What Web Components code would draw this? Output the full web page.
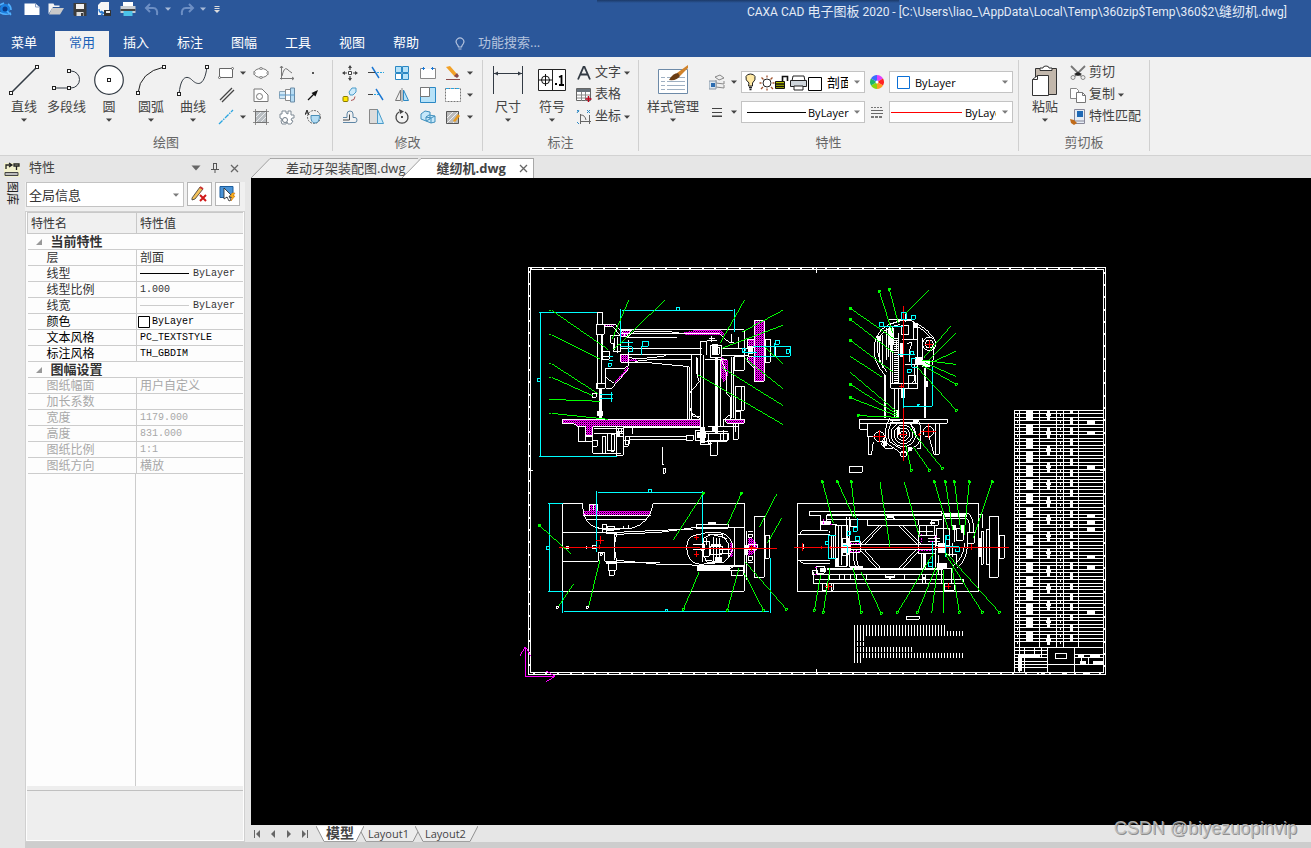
<!DOCTYPE html>
<html lang="zh-CN">
<head>
<meta charset="utf-8">
<title>CAXA CAD 电子图板 2020</title>
<style>
html, body { height: 100%; margin: 0; }
body { overflow: hidden; font-family: "Open Sans", "Noto Sans CJK SC", sans-serif; font-size: 13px; color: #444; }
</style>
</head>
<body>
<cad-app></cad-app>
<script>
/* Base class: every widget states its own styles and markup. */
class Widget extends HTMLElement {
  connectedCallback() {
    if (this.shadowRoot) return;
    const root = this.attachShadow({ mode: 'open' });
    root.innerHTML = '<style>*{box-sizing:border-box}button,select,input{font:inherit;color:inherit;margin:0}button{background:none;border:0;padding:0}' + this.css() + '</style>' + this.html();
  }
  css() { return ''; }
  html() { return '<slot></slot>'; }
}

/* Icon set: [width, height, markup] */
const sq = (x, y) => `<rect x="${x - 1.5}" y="${y - 1.5}" width="3" height="3" fill="#fff" stroke="#222"/>`;
const ICONS = {
  down: [6, 4, '<path d="M0 .5h6L3 3.8z" fill="#444"/>'],
  downlight: [6, 4, '<path d="M0 .5h6L3 3.8z" fill="#a9bbd8"/>'],
  app: [12, 16, '<circle cx="5" cy="8" r="5" fill="#1b7fe0"/><circle cx="5" cy="8" r="2.5" fill="#0b3c8c"/><path d="M-1 11Q5 15 11 12M0 4L4 2M7 10l4 4M8 3q3 2 3 6" stroke="#4fb0ff" stroke-width="1.6" fill="none"/>'],
  new: [16, 16, '<path d="M.5 2.500h11l4 3.500v8h-15z" fill="#fff"/><path d="M11.500 2.500V6h4" fill="none" stroke="#8ba0c4"/>'],
  open: [16, 16, '<path d="M.5 13V2.500h5l1 2h5V6H5z" fill="#f4f4f4"/><path d="M1 13.500L4 7h12l-4 6.500z" fill="#c9c9c9"/>'],
  save: [16, 16, '<path d="M1.500 2h13v13h-12l-1-1z" fill="#3d3d3d"/><path d="M4 3h8v5H4z" fill="#f1f1f1"/><path d="M4.500 11h7v4h-7z" fill="#ddd"/><path d="M9 12h2v3H9z" fill="#3d3d3d"/>'],
  saveas: [16, 16, '<path d="M2 9V4l3-3h8v8" fill="#f6f6f6"/><path d="M2 9v5h7v-5z" fill="#f6f6f6"/><path d="M3 8q0 4 4 4M5 10l3 2-3 2" fill="none" stroke="#2b7ad0" stroke-width="1.400"/><path d="M8 9h7v6H8z" fill="#333"/><path d="M10 10h4v2h-4z" fill="#eee"/>'],
  print: [16, 16, '<path d="M3 1h10v5H3z" fill="#fff"/><path d="M.5 5h15v7H.5z" fill="#c9cdd2"/><path d="M.5 8h15v2H.5z" fill="#444"/><path d="M3.500 10h9v5h-9z" fill="#4cc3e8"/>'],
  undo: [16, 16, '<path d="M6 3L2 7l4 4M2 7h7q5 0 4 7" fill="none" stroke="#6d8fc4" stroke-width="2"/>'],
  redo: [16, 16, '<path d="M10 3l4 4-4 4M14 7H7Q2 7 3 14" fill="none" stroke="#6d8fc4" stroke-width="2"/>'],
  more: [8, 8, '<path d="M1.500 1.500h5M1.500 3.500h5" stroke="#ddd"/><path d="M1 5h6L4 8z" fill="#ddd"/>'],
  bulb: [12, 14, '<path d="M4.500 10Q4 8 2.800 6.800A3.800 3.800 0 1 1 9.200 6.800Q8 8 7.500 10zM4.500 12h3" fill="none" stroke="#b4c3de" stroke-width="1.200"/>'],
  line: [30, 32, '<path d="M2 28L28 2" stroke="#333b44" stroke-width="1.600"/>' + sq(2, 28) + sq(28, 2)],
  pline: [30, 32, '<path d="M1 23h18a8.500 8.500 0 0 0 0-17h-2" fill="none" stroke="#333b44"/>' + sq(2, 23) + sq(17, 23) + sq(17, 6)],
  circle: [30, 32, '<circle cx="15" cy="15" r="14.300" fill="#fff" stroke="#333b44" stroke-width="1.200"/>' + sq(15, 15)],
  arc: [30, 32, '<path d="M2 28Q4 7 28 2" fill="none" stroke="#222"/>' + sq(2, 28) + sq(28, 2)],
  curve: [32, 32, '<path d="M2 29C4 9 11 11 15 15S27 24 30 2" fill="none" stroke="#333b44"/>' + sq(2, 29) + sq(30, 2)],
  rect: [16, 16, '<path d="M1.500 3.500h13v9h-13z" fill="#fff" stroke="#666"/><circle cx="14.500" cy="3.500" r="1" fill="#fff" stroke="#666"/><circle cx="1.500" cy="12.500" r="1" fill="#fff" stroke="#666"/>'],
  ellipse: [16, 16, '<ellipse cx="8" cy="8" rx="7" ry="4.500" fill="#fff" stroke="#777"/><path d="M7 2.500h2v2H7zM7 11.500h2v2H7zM0 7h2v2H0zM14 7h2v2h-2z" fill="#fff" stroke="#777" stroke-width=".7"/>'],
  graph: [16, 16, '<path d="M2.500 1v13.500M1 13.500h14M3 11Q5 2 8 4Q10 6 13 8" fill="none" stroke="#777"/><path d="M1 3l1.500-2L4 3M13 12l2 1.500-2 1.500" fill="none" stroke="#777"/>'],
  point: [16, 16, '<path d="M7 7h2v2H7z" fill="#555"/>'],
  parallel: [16, 16, '<path d="M1 13L13 1M3 15L15 3" stroke="#444" stroke-width="1.300"/>'],
  contour: [16, 16, '<path d="M1 14.500V2h8l6 6v6.500z" fill="#fff" stroke="#777"/><circle cx="6.500" cy="9.500" r="3" fill="none" stroke="#777"/>'],
  shaft: [16, 16, '<path d="M.5 4.500h6v7h-6z" fill="#cfe8f8" stroke="#8aa5b8"/><path d="M6.500 2.500h5v11h-5z" fill="#fff" stroke="#888"/><path d="M11.500 1h4v14h-4z" fill="#b6dcf4" stroke="#6b8ba5"/><path d="M0 8h16" stroke="#5b9ac9"/>'],
  arrow: [16, 16, '<path d="M3 13l6-6" stroke="#111" stroke-width="1.300"/><path d="M13 3l-2.500 6.500L6.500 6z" fill="#111"/>'],
  center: [16, 16, '<path d="M1 15L15 1" stroke="#2aa5e0" stroke-width="1.300" stroke-dasharray="5 1 1.500 1"/>'],
  hatch: [16, 16, '<path d="M2.500 2.500h11v11h-11z" fill="#b9bec2" stroke="#666"/><path d="M3 8l5-5M3 13L13 3M8 13l5-5" stroke="#fff" stroke-width=".7"/><path d="M2.500 0v16M13.500 0v16M0 2.500h16M0 13.500h16" stroke="#777" stroke-width=".8"/>'],
  gear: [16, 16, '<path d="M3 5V2h4v2l2 1V2h3v4h3v3h-2l-1 2 2 1-2 3h-3l-1-2-1 2H3l-1-3 1-2-2-1V5z" fill="#fff" stroke="#7f8a95"/><circle cx="6" cy="11" r="2.500" fill="#fff" stroke="#6f7a85"/>'],
  detail: [16, 16, '<circle cx="9" cy="8" r="6.500" fill="none" stroke="#666" stroke-dasharray="2 1"/><path d="M6 6.500h8.500q0 7.500-4.500 7.500T6 6.500z" fill="#b3dcf3" stroke="#4a8fb8"/><path d="M0 6l2-5 2 5M1 4h2" fill="none" stroke="#222"/>'],
  move: [16, 16, '<path d="M6.500 6.500h3v3h-3z" fill="#fff" stroke="#444"/><path d="M8 1v4M8 11v4M1 8h4M11 8h4" stroke="#444" stroke-width="1.200"/><path d="M8 0l2 3H6zM8 16l2-3H6zM0 8l3-2v4zM16 8l-3-2v4z" fill="#444"/>'],
  trim: [16, 16, '<path d="M4 2l7 11" stroke="#1976d2" stroke-width="1.400"/><path d="M0 7.500h7" stroke="#444"/><path d="M9 7.500h7" stroke="#2aa5e0" stroke-dasharray="2 1"/>'],
  array: [16, 16, '<path d="M1.500 1.500h6v6h-6zM8.500 1.500h6v6h-6zM8.500 8.500h6v6h-6z" fill="#b7e2f8" stroke="#2b88c4"/><path d="M1.500 8.500h6v6h-6z" fill="#fff" stroke="#2b88c4"/>'],
  stretch: [16, 16, '<path d="M.5 3.500h15v10H.5z" fill="#fff" stroke="#888"/><path d="M5 3.500h6" stroke="#f1f1f1"/><path d="M2 3.500h3M11 3.500h3M3.500 2v3M12.500 2v3" stroke="#1976d2"/>'],
  erase: [16, 16, '<path d="M1 2l4-1 7 8-2 3z" fill="#f2a127"/><path d="M9 11l3-3 2 3-2 2z" fill="#8a4b4b"/><path d="M1 14.500h14" stroke="#8a4b4b"/>'],
  copyobj: [16, 16, '<rect x="1" y="9.500" width="5" height="5" rx="1" fill="#ffe600" stroke="#8a7a00"/><path d="M7 5l3-4h4v4l-3 3H8z" fill="#cdeafa" stroke="#4a9bc9"/><path d="M9 13.500q4 0 4-4" fill="none" stroke="#a55"/>'],
  extend: [16, 16, '<path d="M8 2l7 11" stroke="#1976d2" stroke-width="1.400"/><path d="M0 7.500h5" stroke="#444"/><path d="M6 7.500h5" stroke="#2aa5e0" stroke-dasharray="2 1"/>'],
  mirror: [16, 16, '<path d="M6.500 3v10.500h-5z" fill="#eee" stroke="#777"/><path d="M9.500 3v10.500h5z" fill="#b7e2f8" stroke="#2b88c4"/><path d="M8 1v14" stroke="#888"/>'],
  scale: [16, 16, '<path d="M.5.5h15v15H.5z" fill="#b7e2f8" stroke="#2b88c4"/><path d="M.5.5h9v9h-9z" fill="#fff" stroke="#777"/>'],
  box: [16, 16, '<path d="M.5 1.500h15v13H.5z" fill="#fff" stroke="#777" stroke-dasharray="2 1"/><path d="M1 1.500h14" stroke="#2aa5e0" stroke-dasharray="3 2"/>'],
  offset: [16, 16, '<path d="M1 8.500h4V5q0-3 3-3t3 3v3.500h2q2 0 2 2.500t-2 2.500H1" fill="none" stroke="#5f86a5"/><path d="M1 11h6.500V5.500" fill="none" stroke="#444"/>'],
  taper: [16, 16, '<path d="M1.500.5h8v14h-8z" fill="#dcdcdc" stroke="#888"/><path d="M9.500.5l6 14h-6z" fill="#c6e8fa" stroke="#4a9bc9"/>'],
  rotate: [16, 16, '<path d="M5 3A6 6 0 1 0 11 3" fill="none" stroke="#444" stroke-width="1.300"/><path d="M5 0l5 2.500L6 5zM7 7h2v2H7z" fill="#444"/>'],
  cube: [16, 16, '<path d="M1 5l4-3 5 1v7l-4 2-5-2zM6 8l3-2 6 1v6l-4 1-5-2z" fill="#c6e8fa" stroke="#3f8fbd"/><path d="M6 8l5 1v5M11 9l4-2" fill="none" stroke="#3f8fbd"/>'],
  edithatch: [16, 16, '<path d="M1.500 2.500h12v12h-12z" fill="#bbb" stroke="#555"/><path d="M2 9l6-6M2 14L13 3M8 14l5-5" stroke="#eee"/><path d="M8 12l5-7 2 2-5 6z" fill="#e69a1f"/>'],
  dim: [32, 30, '<path d="M1.500 1v28M30.500 1v28M2 8.500h28" stroke="#333b44"/><path d="M2 8.500l4-2v4zM30 8.500l-4-2v4z" fill="#333b44"/>'],
  symbol: [30, 30, '<path d="M1.500 4.500h27v21h-27zM15.500 4.500v21" fill="#fff" stroke="#222"/><circle cx="8.500" cy="15" r="4" fill="none" stroke="#111"/><path d="M8.500 9v12M2 15h13" stroke="#111"/><path d="M18 18h2v2h-2z" fill="#000"/><path d="M24.500 10v9.500M22 20h5M22 12l3-1" stroke="#000" stroke-width="1.800" fill="none"/>'],
  text: [16, 16, '<path d="M2 14.500L7.500 2h1L14 14.500M4.500 9.500h7" fill="none" stroke="#333b44" stroke-width="1.800"/>'],
  table: [16, 16, '<path d="M.5 1.500h14v12H.5z" fill="#fff" stroke="#666"/><path d="M1 2h13v3H1z" fill="#6a737c"/><path d="M1 8h13M1 11h13M5.500 5v9M9.500 5v9" stroke="#888"/><path d="M12.500 9v6M9.500 12h6" stroke="#c0021b" stroke-width="1.500"/>'],
  coord: [16, 16, '<path d="M4.500 5v10M4 12.500h11M5 6q4 0 5 5M13.500 6v9" fill="none" stroke="#666"/><path d="M1 1l2 2M3 1L1 4M11 1l3 3M14 1l-3 3M1 13l2 2" stroke="#2b88c4"/>'],
  style: [32, 30, '<path d="M1.500 4.500h29v24h-29z" fill="#fff" stroke="#6d8aa8"/><path d="M4 12.500h4M4 16.500h4M4 20.500h4M4 24.500h4M10 12.500h18M10 16.500h18M10 20.500h18M10 24.500h18" stroke="#9fb0c2"/><path d="M31 0L20 8l3 3 8-8z" fill="#d0822a"/><path d="M21 8q-5 0-9 7 8 1 11-4z" fill="#6b3d14"/>'],
  layers: [16, 16, '<path d="M6 3l5-2 4 3-5 2zM7 6v3l8 1V7M7 10v3l8 1v-3" fill="#eee" stroke="#888"/><path d="M0 7h7v8H0z" fill="#dbe6f0" stroke="#8a97a5"/><path d="M2 9h4v4H2z" fill="#2b6cb0"/>'],
  lines: [16, 16, '<path d="M3 4.500h10M3 8.500h10M3 12.500h10" stroke="#444"/><path d="M3 11.500h10" stroke="#999"/>'],
  wheel: [14, 14, '<path d="M7 7V0A7 7 0 0 1 13 3.500z" fill="#e040fb"/><path d="M7 7l6-3.500a7 7 0 0 1 0 7z" fill="#f22"/><path d="M7 7l6 3.500A7 7 0 0 1 7 14z" fill="#ff9a1f"/><path d="M7 7v7a7 7 0 0 1-6-3.500z" fill="#8bd60b"/><path d="M7 7l-6 3.500a7 7 0 0 1 0-7z" fill="#1fb56a"/><path d="M7 7L1 3.500A7 7 0 0 1 7 0z" fill="#3a6cff"/><circle cx="7" cy="7" r="1.500" fill="#fff"/>'],
  widths: [14, 14, '<path d="M1 2.500h12" stroke="#777" stroke-dasharray="2 1"/><path d="M1 5.500h12M1 8.500h12" stroke="#666"/><path d="M1 12h12" stroke="#777" stroke-width="2" stroke-dasharray="3 1"/>'],
  paste: [28, 32, '<path d="M4.500 3.500h21v26h-21z" fill="#c2b7ab" stroke="#333"/><path d="M9 5.500h12V3h-3Q18 1 15 1t-3 2H9z" fill="#fff" stroke="#333"/><path d="M1.500 30.500v-16l5-4h11v20z" fill="#fff" stroke="#333"/><path d="M1.500 14.500h5v-4" fill="none" stroke="#333"/>'],
  cut: [16, 16, '<path d="M1 1l10 10M15 1L5 11" stroke="#777" stroke-width="1.800"/><path d="M4 9l4-2 4 2-4 2z" fill="#222"/><circle cx="3" cy="12.500" r="2" fill="#eee" stroke="#888"/><circle cx="13" cy="12.500" r="2" fill="#eee" stroke="#888"/>'],
  copy: [16, 16, '<path d="M.5 1.500h6l2 2v8h-8z" fill="#fff" stroke="#888"/><path d="M6.500 5.500h6l3 3v7h-9z" fill="#fff" stroke="#777"/><path d="M12.500 5.500v3h3" fill="none" stroke="#777"/>'],
  match: [16, 16, '<path d="M4.500.5h10v14h-10z" fill="#e6edf5" stroke="#889"/><path d="M7 2h6v6H7z" fill="#1f69b5"/><path d="M5 12h9" stroke="#889"/><path d="M0 10l4 1 3 3-3 2-3-2z" fill="#c06b1a"/>'],
  layerstate: [82, 20, '<path d="M6 11Q2 8 3 4.500 4 2 7.500 2T12 4.500Q13 8 9.500 11v3h-4z" fill="#ffe9a3" stroke="#222"/><path d="M6 15.500h3M6.500 17.500h2" stroke="#222" stroke-width="1.500"/><circle cx="24" cy="11" r="4" fill="#fff" stroke="#222"/><path d="M24 3.500v2M24 16.500v2M16.500 11h2M29.500 11h2M18.500 5.500l2 2M28 15l2 2M29.500 5.500l-2 2M20 15l-2 2" stroke="#a0522d" stroke-width="1.300"/><path d="M32.500 9.500h9v7h-9z" fill="#b5c000" stroke="#111"/><path d="M33 12h8M33 14.500h8M39.500 9V4.500h5V9" fill="none" stroke="#111" stroke-width="1.600"/><path d="M50 4h11l1 5H49z" fill="#fff" stroke="#222"/><path d="M47.500 8.500h16v6h-16z" fill="#cfd6dc" stroke="#222"/><path d="M51 14h9v4h-9z" fill="#fff" stroke="#222"/><path d="M65.500 5.500h13v13h-13z" fill="#fff" stroke="#000"/>'],
  solid: [60, 3, '<path d="M1 1.500h59" stroke="#000"/>'],
  redline: [71, 3, '<path d="M0 1.500h71" stroke="#f00"/>'],
  swatch: [13, 13, '<path d="M.5.5h12v12H.5z" fill="#fff" stroke="#0a6fd6"/>'],
  longline: [49, 3, '<path d="M0 1.500h49" stroke="#000"/>'],
  thinline: [49, 3, '<path d="M0 1.500h49" stroke="#ccc"/>'],
  blacksq: [12, 12, '<path d="M.5.5h11v11H.5z" fill="#fff" stroke="#000"/>'],
  paneldown: [10, 6, '<path d="M.5 .5h9L5 5.500z" fill="#666"/>'],
  pin: [10, 10, '<path d="M3 .5h4M3.500 0v6M6.500 0v6M1 6.500h8M5 6v4" fill="none" stroke="#555"/>'],
  close: [9, 9, '<path d="M1 1l7 7M8 1L1 8" stroke="#666" stroke-width="1.300"/>'],
  pencilx: [18, 16, '<path d="M1 12L9 1l3 2-8 10-3 1z" fill="#f3c15b" stroke="#333" stroke-width=".8"/><path d="M9 1l3 2" stroke="#c33" stroke-width="2"/><path d="M9 9l6 6M15 9l-6 6" stroke="#d01818" stroke-width="2"/>'],
  pick: [18, 18, '<path d="M1 1.500h13v11H1z" fill="#4a93d6" stroke="#1c5d9c"/><path d="M5 3v11l3-2 2 4 2-1-2-4h3z" fill="#fff" stroke="#222" stroke-width=".8"/><path d="M13 8l-2 4h2l-1 4 4-5h-2l2-3z" fill="#ffb31a" stroke="#c76a00" stroke-width=".5"/>'],
  library: [16, 16, '<path d="M0 2h16v14H0z" fill="#f1f0cc"/><path d="M2 8V4h5M5 2l3 2-3 2M10 3h5v2h-5zM12.500 5v4" stroke="#222" fill="none" stroke-width="1.300"/><path d="M1 11.500h13v3H1z" fill="#bbb" stroke="#444"/>'],
  expand: [6, 6, '<path d="M6 0v6H0z" fill="#999"/>'],
  first: [8, 8, '<path d="M1.500 0v8" stroke="#666"/><path d="M7 0v8L3 4z" fill="#666"/>'],
  prev: [8, 8, '<path d="M6 0v8L2 4z" fill="#666"/>'],
  next: [8, 8, '<path d="M2 0v8l4-4z" fill="#666"/>'],
  last: [8, 8, '<path d="M6.500 0v8" stroke="#666"/><path d="M1 0v8l4-4z" fill="#666"/>']
};

class CadIcon extends Widget {
  css() { return ':host{display:inline-flex;flex:none}svg{display:block}'; }
  html() {
    const [w, h, body] = ICONS[this.getAttribute('name')];
    return `<svg width="${w}" height="${h}" viewBox="0 0 ${w} ${h}" aria-hidden="true">${body}</svg>`;
  }
}

const icon = n => `<cad-icon name="${n}"></cad-icon>`;

class TitleBar extends Widget {
  css() { return `
    :host{display:flex;position:relative;height:31px;color:#e4ebf6;align-items:flex-start;justify-content:space-between}
    .quick{display:flex;align-items:center;height:18px}
    button{display:flex;align-items:center;justify-content:center;width:16px;height:16px}
    .quick .file{margin-right:8px}
    .app{width:12px;margin-right:12px}
    .redo{margin-left:3px}
    .more{width:12px}
    h1{margin:0 24px 0 0;font:400 12px/24px Roboto,"Noto Sans CJK SC",sans-serif;white-space:nowrap}
    h1 span{font-size:13px}
    .shade{position:absolute;left:597px;width:23%;top:0;height:3px;background:linear-gradient(#1c3a68,#2b579a)}`; }
  html() {
    const files = [['new', '新建'], ['open', '打开'], ['save', '保存'], ['saveas', '另存为'], ['print', '打印']];
    return `<div class="quick"><button class="app" aria-label="CAXA">${icon('app')}</button>` +
      files.map(([n, t]) => `<button class="file" aria-label="${t}">${icon(n)}</button>`).join('') +
      `<button aria-label="撤销">${icon('undo')}</button><button aria-label="撤销列表">${icon('downlight')}</button>
       <button class="redo" aria-label="恢复">${icon('redo')}</button><button aria-label="恢复列表">${icon('downlight')}</button>
       <button class="more" aria-label="自定义">${icon('more')}</button></div>
       <div class="shade"></div>
       <h1>CAXA CAD <span>电子图板</span> 2020 - [C:\\Users\\liao_\\AppData\\Local\\Temp\\360zip$Temp\\360$2\\<span>缝纫机</span>.dwg]</h1>`;
  }
}

class RibbonTabs extends Widget {
  css() { return `
    :host{display:flex;height:26px;color:#fff;align-items:stretch}
    button{width:54px;line-height:20px;padding-bottom:4px;text-align:center}
    .menu{width:48px;margin-right:7px}
    .on{background:#f1f1f1;color:#1a62b8}
    label{display:flex;align-items:center;margin-left:21px;gap:12px;color:#b4c3de}
    input{width:120px;border:0;background:none;padding:0 0 4px;outline:0}
    input::placeholder{color:#b4c3de;opacity:1}`; }
  html() {
    return '<button class="menu">菜单</button>' +
      ['常用', '插入', '标注', '图幅', '工具', '视图', '帮助'].map((t, i) => `<button${i ? '' : ' class="on"'}>${t}</button>`).join('') +
      `<label>${icon('bulb')}<input placeholder="功能搜索..." aria-label="功能搜索"></label>`;
  }
}

class BigButton extends Widget {
  css() { return `
    :host{display:block;width:var(--w,42px);flex:none}
    button{display:flex;flex-direction:column;align-items:center;width:100%;height:66px;white-space:nowrap}
    .pic{height:32px;display:flex;align-items:flex-start}
    .t{line-height:18px}
    .d{height:10px;display:flex;align-items:center}`; }
  html() {
    return `<button><span class="pic">${icon(this.getAttribute('icon'))}</span><span class="t"><slot></slot></span>${this.hasAttribute('flat') ? '' : `<span class="d">${icon('down')}</span>`}</button>`;
  }
}

class SmallButton extends Widget {
  css() { return `
    :host{display:flex;height:22px;align-items:center}
    button{display:flex;align-items:center;height:22px;white-space:nowrap}
    .p{width:26px;justify-content:center}
    :host([drop]) .p{width:24px}
    :host .text .p{width:auto;gap:3px}
    .text{display:flex}
    .t{line-height:18px;padding-bottom:4px}
    .d{width:10px;justify-content:center}
    .text .d{width:12px}
    .bare{display:flex}`; }
  html() {
    const t = this.getAttribute('text') || '';
    return `<span class="${t ? 'text' : 'bare'}"><button class="p" ${t ? '' : `aria-label="${this.getAttribute('icon')}"`}>${icon(this.getAttribute('icon'))}${t && `<span class="t">${t}</span>`}</button>${this.hasAttribute('drop') ? `<button class="d" aria-label="更多">${icon('down')}</button>` : ''}</span>`;
  }
}

class RibbonGroup extends Widget {
  css() { return `
    :host{display:flex;flex-direction:column;height:91px;border-right:1px solid #d0d0d0;flex:none}
    .body{display:flex;height:72px;padding:5px var(--pr,5px) 0 var(--pl,3px)}
    .name{text-align:center;line-height:18px;margin-top:1px;color:#666}`; }
  html() { return `<div class="body"><slot></slot></div><div class="name">${this.getAttribute('label')}</div>`; }
}

class CadCombo extends Widget {
  css() { return `
    :host{display:inline-grid;width:124px;height:22px;align-items:center;background:#fff;border:1px solid #c3c3c3;color:#000}
    select,.art,.arrow{grid-area:1/1}
    select{appearance:none;border:0;background:none;width:100%;height:100%;padding:0 var(--r,12px) 0 var(--l,4px);font-size:var(--fs,11px);border-radius:0;overflow:hidden}
    .art,.arrow{pointer-events:none;display:flex}
    .art{margin-left:var(--a,4px)}
    .arrow{justify-self:end;margin-right:4px;opacity:.7}`; }
  html() {
    const a = this.getAttribute('art');
    return `<select aria-label="${this.getAttribute('label')}"><option>${this.getAttribute('value')}</option></select>${a ? `<span class="art">${icon(a)}</span>` : ''}<span class="arrow">${icon('down')}</span>`;
  }
}

class RibbonBar extends Widget {
  css() { return `
    :host{display:flex;height:99px;padding-top:3px;background:#f1f1f1;border-bottom:1px solid #d2d2d2}
    .g{display:grid;grid-auto-flow:column;grid-template-rows:repeat(3,22px);align-content:start;margin-top:-3px}
    .list{display:grid;grid-template-rows:repeat(3,22px);margin-top:-3px;padding-left:2px}
    .pairs{display:grid;grid-template-rows:repeat(2,30px);grid-template-columns:38px 124px 24px 124px;align-items:center;padding-top:2px}
    .pairs cad-icon,.pairs small-button{justify-self:center}
    .layer{--l:85px;--a:1px;--fs:13px;--r:16px}
    .color{--l:25px;--a:7px}
    .ltype{--l:66px}
    .lwidth{--l:75px;--a:1px;--r:16px}`; }
  html() {
    const s = (n, d) => `<small-button icon="${n}"${d ? ' drop' : ''}></small-button>`;
    return `
    <ribbon-group label="绘图" style="--pr:6px">
      <big-button icon="line">直线</big-button><big-button icon="pline" flat style="--w:43px">多段线</big-button>
      <big-button icon="circle">圆</big-button><big-button icon="arc">圆弧</big-button><big-button icon="curve">曲线</big-button>
      <div class="g">${s('rect', 1)}${s('parallel')}${s('center', 1)}${['ellipse', 'contour', 'hatch', 'graph', 'shaft', 'gear', 'point', 'arrow', 'detail'].map(n => s(n)).join('')}</div>
    </ribbon-group>
    <ribbon-group label="修改" style="--pl:4px;--pr:7px">
      <div class="g">${['move', 'copyobj', 'offset', 'trim', 'extend', 'taper', 'array', 'mirror', 'rotate', 'stretch', 'scale', 'cube'].map(n => s(n)).join('')}${s('erase', 1)}${s('box', 1)}${s('edithatch', 1)}</div>
    </ribbon-group>
    <ribbon-group label="标注">
      <big-button icon="dim" style="--w:44px">尺寸</big-button><big-button icon="symbol" style="--w:44px">符号</big-button>
      <div class="list"><small-button icon="text" text="文字" drop></small-button><small-button icon="table" text="表格"></small-button><small-button icon="coord" text="坐标" drop></small-button></div>
    </ribbon-group>
    <ribbon-group label="特性" style="--pl:4px">
      <big-button icon="style" style="--w:60px">样式管理</big-button>
      <div class="pairs">
        ${s('layers', 1)}<cad-combo class="layer" label="图层" value="剖面" art="layerstate"></cad-combo>${icon('wheel')}<cad-combo class="color" label="颜色" value="ByLayer" art="swatch"></cad-combo>
        ${s('lines', 1)}<cad-combo class="ltype" label="线型" value="ByLayer" art="solid"></cad-combo>${icon('widths')}<cad-combo class="lwidth" label="线宽" value="ByLayer" art="redline"></cad-combo>
      </div>
    </ribbon-group>
    <ribbon-group label="剪切板" style="--pl:5px;--pr:8px">
      <big-button icon="paste">粘贴</big-button>
      <div class="list" style="padding-left:4px"><small-button icon="cut" text="剪切"></small-button><small-button icon="copy" text="复制" drop></small-button><small-button icon="match" text="特性匹配"></small-button></div>
    </ribbon-group>`;
  }
}

class SideStrip extends Widget {
  css() { return `
    :host{display:block;width:25px;flex:none;padding:5px 0 0 4px}
    button{display:flex;flex-direction:column;align-items:flex-start;gap:4px;color:#222}
    span{writing-mode:vertical-rl;text-orientation:sideways;font-size:12px;line-height:16px}`; }
  html() { return `<button>${icon('library')}<span>图库</span></button>`; }
}

class PropertyPanel extends Widget {
  css() { return `
    :host{display:flex;flex-direction:column;width:220px;flex:none}
    header{display:flex;align-items:center;height:26px;padding:0 6px 2px 4px;gap:9px}
    h2{margin:0;font-size:13px;line-height:18px;padding-bottom:2px;font-weight:400;flex:1}
    header button{display:flex;width:10px;justify-content:center}
    .pick{display:flex;gap:3px;height:29px;background:#f0f0f0;padding:0 5px 4px 0}
    .pick cad-combo{flex:1;height:25px;--l:2px;--fs:13px;color:#333;margin-left:1px}
    .pick button{width:25px;height:24px;background:#fff;border:1px solid #b5b5b5;display:flex;align-items:center;justify-content:center}
    .frame{flex:1;display:flex;flex-direction:column;border:1px solid #d0d0d0;background:#fdfdfd;padding:0 1px 1px}
    table{border-collapse:collapse;width:100%;table-layout:fixed;font-size:12px;color:#333}
    col:first-child{width:109px}
    th,td{font-weight:400;text-align:left;padding:0 0 0 3px;height:16px;line-height:15px;border-bottom:1px solid #ccc;white-space:nowrap;overflow:hidden}
    thead th{height:21px;background:#f0f0f0;border:1px solid #c8c8c8;border-right:0;line-height:19px}
    tbody th{padding-left:19px}
    td{border-left:1px solid #ccc}
    .cell{display:flex;height:15px;align-items:center}
    .sec th{font-weight:700;font-size:13px;padding-left:8px}
    .sec .cell{gap:9px}
    .now th,.now td{color:#000}
    .off th,.off td{color:#a8a8a8}
    .m{font:10px/15px "Liberation Mono",monospace}
    .sv .cell{gap:4px}
    td.c{padding-left:1px}.c .cell{gap:2px}
    .rest{flex:1;border-right:1px solid #ccc;width:109px}
    .help{height:54px;background:#eee;padding-top:4px}
    .help hr{margin:0;border:0;border-top:1px solid #c0c0c0}`; }
  html() {
    const row = (cls, k, v, tc = '') => `<tr class="${cls}"><th scope="row"><div class="cell">${k}</div></th><td class="${tc}"><div class="cell">${v}</div></td></tr>`;
    const m = t => `<span class="m">${t}</span>`;
    const sec = t => `<tr class="sec"><th colspan="2"><div class="cell">${icon('expand')}<span>${t}</span></div></th></tr>`;
    return `
    <header><h2>特性</h2><button aria-label="菜单">${icon('paneldown')}</button><button aria-label="固定">${icon('pin')}</button><button aria-label="关闭">${icon('close')}</button></header>
    <div class="pick"><cad-combo label="对象" value="全局信息"></cad-combo><button aria-label="清除选择">${icon('pencilx')}</button><button aria-label="快速选择">${icon('pick')}</button></div>
    <div class="frame">
      <table><colgroup><col><col></colgroup><thead><tr><th>特性名</th><th>特性值</th></tr></thead><tbody>
      ${sec('当前特性')}
      ${row('', '层', '剖面')}
      ${row('', '线型', `${icon('longline')}${m('ByLayer')}`, 'sv')}
      ${row('', '线型比例', m('1.000'))}
      ${row('', '线宽', `${icon('thinline')}${m('ByLayer')}`, 'sv')}
      ${row('now', '颜色', `${icon('blacksq')}${m('ByLayer')}`, 'c')}
      ${row('now', '文本风格', m('PC_TEXTSTYLE'))}
      ${row('now', '标注风格', m('TH_GBDIM'))}
      ${sec('图幅设置')}
      ${row('off', '图纸幅面', '用户自定义')}
      ${row('off', '加长系数', '')}
      ${row('off', '宽度', m('1179.000'))}
      ${row('off', '高度', m('831.000'))}
      ${row('off', '图纸比例', m('1:1'))}
      ${row('off', '图纸方向', '横放')}
      </tbody></table>
      <div class="rest"></div>
      <div class="help"><hr></div>
    </div>`;
  }
}

class DocTab extends Widget {
  css() { return `
    :host{display:flex;height:20px;position:relative;white-space:nowrap}
    :host([next]){margin-left:-16px}
    svg{display:block;flex:none}
    .b{display:flex;align-items:center;gap:13px;padding:0 12px 0 15px;border-top:1px solid #a8a8a8;background:var(--bg,#f0f0f0)}
    :host([on]) .b{font-weight:700;border-right:1px solid #a8a8a8;padding-right:5px}
    :host([on]){--bg:#fff}
    button{display:flex;line-height:18px}
    .t{padding-bottom:2px}`; }
  html() {
    const on = this.hasAttribute('on');
    return `<svg width="20" height="20" viewBox="0 0 20 20"><path d="M0 20L19 .5h1V20z" fill="${on ? '#fff' : '#f0f0f0'}"/><path d="M0 20L19 .5h1" fill="none" stroke="#a0a0a0"/></svg>
    <span class="b"><button class="t"><slot></slot></button>${on ? `<button aria-label="关闭">${icon('close')}</button>` : ''}</span>`;
  }
}

class SheetTab extends Widget {
  css() { return `
    :host{display:flex;height:16px;position:relative;white-space:nowrap;margin-right:-6px;--bg:#ececec}
    :host([on]){--bg:#fff;z-index:1}
    svg{display:block;flex:none}
    button{padding:0 4px 0 2px;line-height:14px;font-size:11px;background:var(--bg);border-bottom:1px solid #a0a0a0}
    :host([on]) button{font-weight:700;font-size:14px;line-height:13px;padding:0 2px 2px}`; }
  html() {
    const f = this.hasAttribute('on') ? '#fff' : '#ececec';
    return `<svg width="8" height="16" viewBox="0 0 8 16"><path d="M0 0h8v16z" fill="${f}"/><path d="M0 0l8 15.500" stroke="#909090"/></svg><button><slot></slot></button><svg width="8" height="16" viewBox="0 0 8 16"><path d="M0 0h8L0 16z" fill="${f}"/><path d="M8 0L0 15.500" stroke="#909090"/></svg>`;
  }
}

/* Sewing machine assembly drawing. Each view has its own origin and a scale of three units to one pixel. */
class DrawingView extends Widget {
  css() { return ':host{display:block;background:#000;min-height:0}svg{display:block;width:100%;height:100%}'; }
  html() {
    const p = (c, d, extra = '') => `<path d="${d}" stroke="${c}" fill="none" stroke-width="3" ${extra}/>`;
    const W = '#fff', G = '#0f0', C = '#0ff', R = '#f00', M = '#f0f';
    /* Snap a coordinate to the middle of a device pixel, and a length to whole pixels. */
    const at = v => Math.floor(v / 3) * 3 + 1.5, len = v => Math.max(3, Math.round(v / 3) * 3);
    const boxes = list => list.map(([x, y, w, h]) => `M${at(x)} ${at(y)}h${len(w)}v${len(h)}h${-len(w)}z`).join('');
    const fill = list => `<path d="${list.map(([x, y, w, h]) => `M${x} ${y}h${w}v${h}h${-w}z`).join('')}" fill="#fff"/>`;
    const hatch = d => `<path d="${d}" fill="url(#h)" stroke="#fff" stroke-width="3"/>`;
    const tint = d => `<path d="${d}" fill="url(#h)"/>`;
    const leaders = (list, c = G) => p(c, list.map(([x, y, u, v, s]) => `M${x} ${y}L${u} ${v}` + (s ? `M${at(x) - 3} ${at(y) - 3}h6v6h-6z` : '')).join(''));
    const cross = list => p(R, list.map(([x, y, r]) => `M${x - r} ${at(y)}h${2 * r}M${at(x)} ${y - r}v${2 * r}`).join(''));
    const view = (x, y, s) => `<g transform="translate(${x} ${y}) scale(.333333)">${s}</g>`;
    const circles = list => list.map(([x, y, r]) => `<circle cx="${x}" cy="${y}" r="${r}" fill="none" stroke="#fff" stroke-width="3"/>`).join('');

    const front = hatch('M127 478H541V500H219V528H197V500H173L160 490H127Z M613 478H673V490H620Z M703 181h30v183h-30z M303 211H335L318 230H303Z M683 238H703V264H683Z M683 290H703V325L683 305Z M303 285H325V307H303Z') +
      tint('M470 223L520 211H603L615 226Z M603 290L624 302V345L612 368L603 350Z M285 365L325 318V330L288 372Z M255 192H285V199H255Z M325 298H350V304H325Z') +
      p(W, 'M232 157h16v36M232 157v36M232 223V385M247 223V290M244 223V370M253 193H285L318 230M253 199H278L303 230M250 290h20M257 325H312L327 317V240M257 325V370M257 352L282 370M257 385H275L327 325M272 226h30v48H280V250H272zM301 209H673V240M301 222H600L628 248H643M325 229L345 214H440L500 222M320 232H470M301 265H545M301 283H545M328 292L350 297L430 289L440 284H545M345 304L400 298H515M327 308H385L508 320V478M515 284V478M503 320V478M541 245V555H570M550 285V550M541 245H560V285M560 242H590M530 290V340L538 365L508 400V440L520 470H541M601 290L620 340L618 400L632 412V478M634 290V475M642 290V475M634 222V245M673 209V285M603 265H685M603 286H685M655 230V265M285 235V270M292 230V280M575 228V245M567 236H585M555 298H620M534 345V295M601 300V500M613 478L633 462M520 462L541 478M222 522H310M310 503H540M219 500V580H302M326 530H500M326 539H500M337 505V522M565 500H656M427 561V614h5M565 522V550H575M222 506H310M305 503V520M296 505V530M545 515H625M600 543H560M610 510V540M648 490V515M610 478V500') +
      p(W, boxes([[229, 193, 24, 30], [229, 370, 28, 15], [247, 275, 22, 25], [570, 255, 33, 35], [577, 262, 20, 20], [643, 288, 30, 43], [645, 379, 18, 72], [663, 379, 8, 72], [735, 238, 16, 69], [685, 258, 80, 30], [176, 499, 20, 44], [197, 528, 22, 14], [247, 528, 10, 52], [262, 520, 20, 50], [290, 500, 20, 88], [310, 540, 16, 18], [315, 530, 12, 24], [498, 526, 20, 16], [525, 510, 14, 30], [541, 520, 80, 25], [571, 545, 22, 42], [600, 520, 25, 22], [641, 490, 15, 48], [430, 625, 7, 15], [275, 524, 10, 50], [216, 400, 12, 12], [645, 455, 16, 23], [216, 540, 14, 18], [288, 514, 20, 14]])) +
      p(W, 'M241 385V475M589 290V520', 'style="stroke-width:8"') + fill([[232, 453, 18, 16], [577, 252, 18, 30], [575, 500, 18, 16], [530, 515, 28, 18], [685, 265, 14, 18], [540, 500, 14, 50], [290, 515, 10, 12]]) +
      p(C, 'M232 157H58M61 157V589M58 589H291M301 147V245M307 151H638M643 147V215M301 247H340M301 260h36v16h-12v-11M365 285V258M666 277H712M700 259H811V289H700M764 289V250M240 403h38M275 395v30M240 415h38M268 289h10M268 302h10' + boxes([[468, 142, 8, 8], [52, 354, 8, 8], [367, 244, 17, 14], [265, 310, 9, 9], [766, 241, 12, 12], [799, 268, 8, 12], [667, 265, 8, 10]])) +
      leaders([[95, 151, 265, 269], [95, 225, 240, 297], [95, 311, 235, 402], [95, 352, 220, 408], [87, 418, 240, 424], [95, 460, 265, 478], [326, 121, 276, 238], [434, 121, 280, 270], [673, 121, 600, 250], [788, 151, 665, 217], [788, 196, 605, 265], [788, 310, 735, 262], [788, 385, 675, 295], [788, 436, 605, 322], [788, 493, 535, 345]]) +
      p(G, 'M87 151.500h5M87 223.500h5M87 310.500h5M87 352.500h5M87 460.500h5');

    const side = p(W, 'M285 345Q250 310 252 260Q258 195 330 183H365Q425 210 438 250M290 335Q260 300 262 250Q270 205 330 193M380 198Q410 215 420 232M303 190V385H383V300M309 200V370M270 230V310M278 225V325M290 205V300M297 220V290M333 157h15v30M383 200V300M398 235V300M432 262L428 315M403 325V475M407 325V475M303 370H383M325 220V370M335 238H383M345 315H375V360L365 370M357 195V223H335M350 250L366 248L358 275V305M313 385V475M325 385V475M340 385V475M357 370V385M210 478H472V490H210M232 490V530M210 478V508H232M235 530V585H244L250 545M417 530L432 583H448V490M436 490V583M300 475Q280 500 290 550L330 577H350L385 552Q400 520 385 478M310 480Q290 500 298 545L332 566M232 530H285V565H310M380 565H392V520M333 575h16v14h-16zM300 487H385M360 487L385 540M370 185V240M310 190L330 180M295 180H370') +
      p(W, boxes([[178, 619, 40, 18], [335, 195, 22, 28], [305, 240, 14, 30], [355, 345, 20, 25]])) +
      circles([[418, 252, 20], [418, 252, 12], [340, 523, 10], [340, 523, 19], [340, 523, 28], [340, 523, 37], [268, 530, 15], [415, 515, 16], [283, 551, 8]]) +
      p(W, 'M285 345V475', 'style="stroke-width:6"') + p(W, 'M319 235V372', 'style="stroke-width:13" stroke-dasharray="3 3"') +
      fill([[403, 362, 10, 20], [375, 290, 22, 25], [395, 302, 25, 20], [333, 385, 12, 30], [294, 205, 18, 50], [330, 250, 10, 40], [318, 450, 10, 22], [262, 228, 12, 14], [320, 500, 10, 25], [278, 545, 12, 14], [355, 560, 10, 14], [300, 476, 30, 8], [368, 476, 16, 10], [370, 190, 14, 14]]) +
      p(R, 'M340.500 138V603') + cross([[418, 252, 12], [334, 379, 6], [340, 523, 12], [268, 529, 18], [415, 513, 22], [388, 523, 5]]) +
      p(C, 'M334 157h16v22h-16zM270 199H338M325 283H375M378 295H365V322H385M340 439H427V317M340 385V445' + boxes([[364, 166, 13, 12], [268, 187, 13, 12], [361, 274, 10, 9], [352, 328, 12, 9], [382, 434, 7, 4]])) +
      leaders([[268, 94, 308, 220, 1], [298, 88, 325, 190, 1], [416, 91, 345, 163], [181, 145, 313, 237, 1], [181, 178, 313, 280, 1], [181, 241, 310, 337, 1], [181, 289, 277, 352], [181, 337, 320, 455], [181, 373, 320, 462, 1], [181, 413, 322, 468, 1], [205, 467, 328, 472, 1], [482, 199, 400, 295], [497, 220, 415, 302], [497, 274, 430, 305], [497, 313, 395, 300], [497, 349, 405, 308], [499, 373, 395, 315, 1], [499, 451, 378, 318, 1], [364, 631, 347, 555, 1], [418, 631, 370, 560, 1], [457, 625, 360, 505, 1]]);

    const top = tint('M208 87H232V112H208Z M190 108H395L390 120H190Z M630 200H639V245H630Z M683 185Q708 192 712 215Q708 238 683 243Z') +
      p(W, 'M187 85H127V349H673V85H400M187 85Q188 150 235 160H335Q390 145 400 85M190 121H392M208 108V88H232V108M200 133H380M127 172H265L290 178L420 172L520 158H673M290 172L420 166L520 162M127 259H235V232H255V259H290M284 178V255M290 176Q278 215 290 258M290 256L420 268L515 270M290 262L420 262M515 273H673M643 160V273M540 178Q500 180 500 217Q502 265 540 268L610 262Q640 240 638 210Q630 180 600 173H560ZM520 209H555V225H520M550 190L575 178L620 190M557 255L600 262M545 225L560 262M580 185V260M590 190V255M600 190V250M560 190V210M605 180L625 205V245M547 185V260M680 168V315M683 170H700M683 262H700M235 158Q260 170 300 162M620 285L640 275M565 180H610M560 262H600M600 235H630M600 225H630M310 153V163M325 150V160') +
      p(W, boxes([[703, 124, 30, 183], [737, 181, 12, 69], [265, 265, 25, 22], [268, 287, 16, 16], [529, 147, 96, 12], [620, 275, 50, 12], [635, 287, 35, 14], [685, 178, 12, 8], [685, 245, 12, 12], [247, 148, 12, 24], [262, 155, 20, 12], [550, 200, 18, 45], [570, 215, 35, 25], [241, 235, 7, 7], [685, 209, 28, 16], [218, 212, 12, 8]])) +
      fill([[565, 140, 22, 7], [530, 273, 100, 14], [139, 212, 9, 10], [258, 171, 32, 7], [258, 258, 34, 9], [574, 207, 30, 8], [545, 190, 8, 20], [585, 245, 20, 18], [218, 88, 4, 16], [675, 210, 8, 30], [198, 213, 3, 8]]) +
      p(C, 'M130 85H85M88 85V349M85 349H130M229 48V232M234 52H545M547 48V205M127 349V413M132 409H748M751 250V413' + boxes([[79, 213, 8, 8], [385, 43, 8, 8], [436, 403, 7, 5]])) +
      p(R, 'M118 217.500H540M540 220.500H771') + cross([[241, 195, 12], [238, 217, 6], [529, 187, 8], [529, 237, 8], [695, 218, 9]]) +
      leaders([[58, 151, 152, 236, 1], [160, 328, 115, 395], [240, 255, 205, 398], [550, 55, 460, 195, 1], [664, 55, 622, 150, 1], [770, 58, 718, 157], [785, 130, 742, 205], [490, 403, 538, 290, 1], [622, 405, 657, 280, 1], [730, 405, 673, 295, 1], [799, 403, 675, 260, 1]]) +
      p(W, 'M109.500 394.500h6v6h-6zM199.500 394.500h6v6h-6z') +
      p(M, 'M16.500 604V515M0 542L16 515L32 542M16 604.500H106M78 588L106 604L78 620');

    const bottom = p(W, 'M22 85H566V349H22ZM58 110H455V121M58 110V121H92V165M110 121H455M110 133H455M22 178H120M22 256H120M30 178Q30 167 40 167H115L122 175M30 256Q32 265 42 265H120M155 150V270M147 150V270M170 125V275M178 125V275M232 133V151H385V133M210 210L268 152M222 210L277 152M325 152L385 210M337 152L395 210M210 225L262 280M222 223L272 280M325 280L378 226M337 280L390 226M160 208H440M160 224H440M110 280H460M75 298H460M75 313H520V325H70V290M92 133V150H140M110 121V150M395 235V280M408 235V280M455 115H535Q548 125 550 150V175M460 130H530Q540 135 538 175M533 205Q530 260 500 280M525 205Q520 250 490 272M285 133L300 122L315 133M285 300L300 312L315 300M120 298V313M148 298V313M163 298V313M230 298V313M345 298V313M190 225Q188 260 200 280M198 225Q198 260 208 280M460 121V210M487 205V245M478 205V245M437 180V280M445 240V300M566 120H578V160M493 155V200M132 181V250M126 181V250M415 190H450M415 200H450M385 170H430M465 240H500V270') +
      p(W, boxes([[137, 150, 35, 122], [97, 325, 12, 22], [124, 325, 6, 22], [462, 325, 30, 22], [80, 275, 25, 20], [67, 285, 15, 12], [385, 180, 50, 55], [387, 150, 20, 30], [410, 150, 25, 30], [533, 173, 20, 32], [574, 168, 7, 98], [588, 163, 9, 105], [598, 124, 28, 183], [628, 181, 15, 69], [348, 424, 38, 10], [180, 133, 22, 20], [455, 280, 30, 45], [180, 200, 30, 32], [440, 160, 40, 50], [158, 190, 18, 50], [424, 135, 20, 14], [500, 160, 22, 35], [180, 298, 18, 14], [396, 298, 10, 26]])) +
      fill([[566, 190, 8, 55], [445, 205, 22, 28], [398, 235, 10, 45], [460, 115, 70, 12], [155, 205, 20, 28], [92, 137, 30, 14], [180, 272, 40, 12], [440, 265, 30, 16], [487, 150, 12, 16], [512, 150, 10, 24], [395, 305, 12, 10], [90, 280, 18, 12], [137, 250, 10, 24], [420, 140, 16, 8], [290, 122, 22, 8], [285, 302, 30, 6], [35, 208, 6, 14], [110, 118, 345, 5], [110, 280, 350, 4]]) +
      p(M, 'M100 133v16M120 150h8M180 205h30M180 230h30M385 180h10M395 190v10M432 190l10-8M385 228h40M75 278h8M75 300h8M420 200h12', 'stroke-dasharray="5 3"') +
      p(R, 'M12 217.500H657') + cross([[37, 217, 12], [115, 334, 10], [475, 334, 9], [544, 217, 9], [94, 217, 4], [121, 217, 4]]) +
      p(C, 'M137 181H115V250H137M160 212h12v22M202 130V165M428 200V280M468 180V245M468 215H508V230h-12v-9M210 205V184' + boxes([[106, 199, 9, 9], [190, 157, 12, 12], [173, 169, 9, 11], [196, 184, 13, 12], [415, 262, 12, 12], [469, 181, 10, 12]])) +
      leaders([[97, 19, 130, 145, 1], [142, 19, 190, 125, 1], [184, 19, 196, 130, 1], [270, 22, 300, 215], [343, 22, 388, 185], [433, 19, 475, 165, 1], [466, 19, 488, 165, 1], [493, 19, 512, 165, 1], [538, 19, 522, 180, 1], [607, 19, 550, 190, 1], [73, 406, 92, 300, 1], [100, 412, 120, 280, 1], [214, 412, 190, 280, 1], [274, 415, 213, 290, 1], [323, 412, 430, 235, 1], [383, 412, 438, 275, 1], [425, 415, 442, 285], [462, 415, 462, 285], [508, 412, 487, 280, 1], [577, 412, 465, 235, 1], [628, 412, 470, 235, 1]]) +
      [[459, 18, 466], [475, 15, 523], [491, 16, 222], [507, 14, 222], [523, 14, 370], [541, 15, 520], [556, 14, 213]].map(([y, h, x]) => p(W, `M192 ${y}H${x}`, `style="stroke-width:${h}" stroke-dasharray="3 6"`)).join('') + p(W, 'M193.500 450V563');

    /* Parts list: thin rows with blocks standing for text too small to read. */
    let parts = '';
    const top0 = 410, rows = 68;
    for (let i = 0; i < rows; i++) {
      const y = Math.round(top0 + i * 3.45);
      parts += `M1014 ${y}h90v1h-90z`;
      if (i % 4 !== 3) parts += `M1026 ${y}h7v4h-7z`;
      if (i % 5 < 3) parts += `M1047 ${y}h3v4h-3z`;
      if (i % 5 === 1) parts += `M1046 ${y}h5v3h-5z`;
      if (i % 3 !== 1) parts += `M1070 ${y}h3v4h-3z`;
      if (i % 2) parts += `M1017 ${y}h1v3h-1zM1060 ${y}h1v3h-1z`;
      if ([3, 6, 16, 30, 32, 34, 42, 45, 58].includes(i)) parts += `M1087 ${y}h8v4h-8z`;
    }
    [1014, 1019, 1039, 1056, 1063, 1078].forEach(x => parts += `M${x} 410h1v237h-1z`);
    /* Title block */
    parts += 'M1014 647h90v1h-90z';
    [650, 654, 657, 661, 664, 667].forEach(y => parts += `M1014 ${y}h34v1h-34z`);
    [1014, 1019, 1024, 1034, 1041, 1047, 1074].forEach((x, i) => parts += `M${x} 647h1v${i === 3 || i === 4 ? 10 : 25}h-1z`);
    parts += 'M1047 664h27v1h-27zM1074 654h29v1h-29zM1074 657h29v1h-29zM1074 664h29v1h-29zM1018 655h22v2h-22zM1018 658h4v13h-4zM1078 655h6v3h-6zM1090 655h10v2h-10zM1093 661h10v3h-10zM1080 661h6v3h-6zM1081 657h1v7h-1zM1088 657h1v7h-1z';

    return `<svg viewBox="251 178 1060 647" role="img" aria-label="缝纫机装配图" shape-rendering="crispEdges">
      <defs><pattern id="h" width="6" height="6" patternUnits="userSpaceOnUse"><path d="M0 0h3v3H0zM3 3h3v3H3z" fill="#f0f"/><path d="M3 0h3v3H3z" fill="#a0a"/></pattern></defs>
      <path d="M528.500 267.500H1105.500V674.500H528.500ZM530.500 269.500H1103.500V672.500H530.500Z" fill="none" stroke="#fff"/>
      <path d="M529.500 268.500H1104.500V673.500H529.500Z" fill="none" stroke="#fff" stroke-dasharray="2 10.300"/>
      <path d="M816.500 268v5M816.500 669v5M528 470.500h5M1100 470.500h5M1041 673.500h4M1062 673.500h5M1083 673.500h7" fill="none" stroke="#fff"/>
      <path d="${parts}" fill="#fff"/><path d="M1055.500 653.500h11v5h-11z" fill="none" stroke="#fff"/>
      ${view(520, 260, front)}${view(790, 260, side)}${view(520, 475, top)}${view(790, 475, bottom)}</svg>`;
  }
}

class DocArea extends Widget {
  css() { return `
    :host{display:flex;flex-direction:column;flex:1;min-width:0;margin-left:6px}
    nav{display:flex}
    .docs{padding-top:2px}
    drawing-view{flex:1}
    .sheets{height:17px;padding-top:1px}
    .step{width:16px;display:flex;justify-content:center;align-items:center}
    .first{margin-left:-2px}
    .sheets sheet-tab[on]{margin-left:3px}`; }
  html() {
    return `<nav class="docs"><doc-tab>差动牙架装配图.dwg</doc-tab><doc-tab on next>缝纫机.dwg</doc-tab></nav>
    <drawing-view></drawing-view>
    <nav class="sheets"><button class="step first" aria-label="第一张">${icon('first')}</button><button class="step" aria-label="上一张">${icon('prev')}</button><button class="step" aria-label="下一张">${icon('next')}</button><button class="step" aria-label="最后一张">${icon('last')}</button>
      <sheet-tab on>模型</sheet-tab><sheet-tab>Layout1</sheet-tab><sheet-tab>Layout2</sheet-tab></nav>`;
  }
}

class CadApp extends Widget {
  css() { return `
    :host{display:flex;flex-direction:column;height:100vh;position:relative;background:#e6e6e6}
    .head{background:#2b579a}
    main{display:flex;flex:1;min-height:0}
    .work{flex:1;min-width:0;display:flex;flex-direction:column}
    .panes{flex:1;min-height:0;display:flex}
    .foot{height:6px;background:#cdcdcd}
    .mark{position:absolute;right:14px;bottom:8px;font:18px/24px "Liberation Sans",sans-serif;color:rgba(190,190,190,.9);text-shadow:1px 1px 0 rgba(120,120,120,.8)}`; }
  html() {
    return `<div class="head"><title-bar></title-bar><ribbon-tabs></ribbon-tabs></div><ribbon-bar></ribbon-bar>
    <main><side-strip></side-strip><div class="work"><div class="panes"><property-panel></property-panel><doc-area></doc-area></div><div class="foot"></div></div></main>
    <div class="mark">CSDN @biyezuopinvip</div>`;
  }
}

customElements.define('cad-icon', CadIcon);
customElements.define('title-bar', TitleBar);
customElements.define('ribbon-tabs', RibbonTabs);
customElements.define('big-button', BigButton);
customElements.define('small-button', SmallButton);
customElements.define('ribbon-group', RibbonGroup);
customElements.define('cad-combo', CadCombo);
customElements.define('ribbon-bar', RibbonBar);
customElements.define('side-strip', SideStrip);
customElements.define('property-panel', PropertyPanel);
customElements.define('doc-tab', DocTab);
customElements.define('sheet-tab', SheetTab);
customElements.define('drawing-view', DrawingView);
customElements.define('doc-area', DocArea);
customElements.define('cad-app', CadApp);
</script>
</body>
</html>
